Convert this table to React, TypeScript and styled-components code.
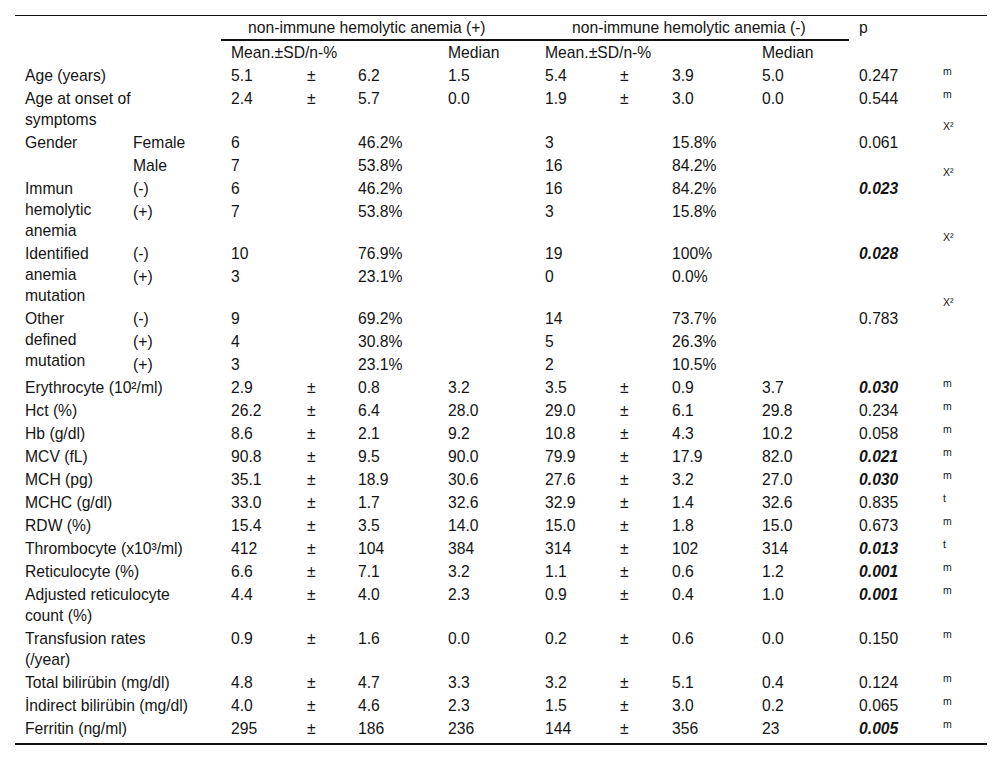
import React from 'react';
import styled, { createGlobalStyle } from 'styled-components';

const Global = createGlobalStyle`
  html, body { margin: 0; padding: 0; background: #fff; }
  body { font-family: "Liberation Sans", Arial, Helvetica, sans-serif; color: #141414; }
`;

const Page = styled.div`
  padding: 15px 13px 0 15px;
`;

const Table = styled.table`
  width: 972px;
  table-layout: fixed;
  border-collapse: separate;
  border-spacing: 0;
  border-top: 1px solid #111;
  border-bottom: 2px solid #111;
  font-size: 15.7px;
  line-height: 21px;
`;

const Body = styled.tbody`
  tr:last-child td { padding-bottom: 4px; }
`;

const Row = styled.tr<{ $h?: number }>`
  ${p => (p.$h ? `height: ${p.$h}px;` : '')}
`;

const Head = styled.th<{ $indent?: number; $rule?: boolean }>`
  padding: 1px 0 1px ${p => p.$indent ?? 10}px;
  vertical-align: top;
  text-align: left;
  font-weight: normal;
  white-space: nowrap;
  ${p => (p.$rule ? 'border-bottom: 2px solid #111;' : '')}
`;

const Cell = styled.td`
  padding: 1px 0 1px 10px;
  vertical-align: top;
  text-align: left;
  white-space: nowrap;
`;

const PVal = styled.span<{ $sig?: boolean }>`
  font-weight: ${p => (p.$sig ? 'bold' : 'normal')};
  font-style: ${p => (p.$sig ? 'italic' : 'normal')};
`;

const Mark = styled.span<{ $lift?: number }>`
  display: block;
  font-size: 10.5px;
  line-height: 10px;
  transform: translateY(${p => 1 - (p.$lift ?? 0)}px);
`;

const widths = [108, 98, 76, 51, 90, 97, 75, 52, 90, 97, 84, 54];

type Stat = {
  label: string[];
  v: [string, string, string, string, string, string];
  p: string;
  sig?: boolean;
  mark: string;
};

type Sub = { sub: string; n1: string; p1: string; n2: string; p2: string; p?: string; sig?: boolean };
type Group = { label: string[]; rows: Sub[]; h?: number };

const Lines = ({ lines }: { lines: string[] }) => (
  <>
    {lines.map((l, i) => (
      <React.Fragment key={i}>
        {i > 0 && <br />}
        {l}
      </React.Fragment>
    ))}
  </>
);

const StatRow = ({ s }: { s: Stat }) => (
  <Row>
    <Cell colSpan={2}>
      <Lines lines={s.label} />
    </Cell>
    <Cell>{s.v[0]}</Cell>
    <Cell>±</Cell>
    <Cell>{s.v[1]}</Cell>
    <Cell>{s.v[2]}</Cell>
    <Cell>{s.v[3]}</Cell>
    <Cell>±</Cell>
    <Cell>{s.v[4]}</Cell>
    <Cell>{s.v[5]}</Cell>
    <Cell>
      <PVal $sig={s.sig}>{s.p}</PVal>
    </Cell>
    <Cell>
      <Mark>{s.mark}</Mark>
    </Cell>
  </Row>
);

const GroupRows = ({ g }: { g: Group }) => (
  <>
    {g.rows.map((r, i) => (
      <Row key={i} $h={i === g.rows.length - 1 ? g.h : undefined}>
        {i === 0 && (
          <Cell rowSpan={g.rows.length}>
            <Lines lines={g.label} />
          </Cell>
        )}
        <Cell>{r.sub}</Cell>
        <Cell>{r.n1}</Cell>
        <Cell />
        <Cell>{r.p1}</Cell>
        <Cell />
        <Cell>{r.n2}</Cell>
        <Cell />
        <Cell>{r.p2}</Cell>
        <Cell />
        <Cell>{r.p && <PVal $sig={r.sig}>{r.p}</PVal>}</Cell>
        <Cell>{i === 0 && <Mark $lift={12}>X²</Mark>}</Cell>
      </Row>
    ))}
  </>
);

const top: Stat[] = [
  { label: ['Age (years)'], v: ['5.1', '6.2', '1.5', '5.4', '3.9', '5.0'], p: '0.247', mark: 'm' },
  { label: ['Age at onset of', 'symptoms'], v: ['2.4', '5.7', '0.0', '1.9', '3.0', '0.0'], p: '0.544', mark: 'm' },
];

const groups: Group[] = [
  {
    label: ['Gender'],
    rows: [
      { sub: 'Female', n1: '6', p1: '46.2%', n2: '3', p2: '15.8%', p: '0.061' },
      { sub: 'Male', n1: '7', p1: '53.8%', n2: '16', p2: '84.2%' },
    ],
  },
  {
    label: ['Immun', 'hemolytic', 'anemia'],
    h: 42,
    rows: [
      { sub: '(-)', n1: '6', p1: '46.2%', n2: '16', p2: '84.2%', p: '0.023', sig: true },
      { sub: '(+)', n1: '7', p1: '53.8%', n2: '3', p2: '15.8%' },
    ],
  },
  {
    label: ['Identified', 'anemia', 'mutation'],
    h: 42,
    rows: [
      { sub: '(-)', n1: '10', p1: '76.9%', n2: '19', p2: '100%', p: '0.028', sig: true },
      { sub: '(+)', n1: '3', p1: '23.1%', n2: '0', p2: '0.0%' },
    ],
  },
  {
    label: ['Other', 'defined', 'mutation'],
    rows: [
      { sub: '(-)', n1: '9', p1: '69.2%', n2: '14', p2: '73.7%', p: '0.783' },
      { sub: '(+)', n1: '4', p1: '30.8%', n2: '5', p2: '26.3%' },
      { sub: '(+)', n1: '3', p1: '23.1%', n2: '2', p2: '10.5%' },
    ],
  },
];

const labs: Stat[] = [
  { label: ['Erythrocyte (10²/ml)'], v: ['2.9', '0.8', '3.2', '3.5', '0.9', '3.7'], p: '0.030', sig: true, mark: 'm' },
  { label: ['Hct (%)'], v: ['26.2', '6.4', '28.0', '29.0', '6.1', '29.8'], p: '0.234', mark: 'm' },
  { label: ['Hb (g/dl)'], v: ['8.6', '2.1', '9.2', '10.8', '4.3', '10.2'], p: '0.058', mark: 'm' },
  { label: ['MCV (fL)'], v: ['90.8', '9.5', '90.0', '79.9', '17.9', '82.0'], p: '0.021', sig: true, mark: 'm' },
  { label: ['MCH (pg)'], v: ['35.1', '18.9', '30.6', '27.6', '3.2', '27.0'], p: '0.030', sig: true, mark: 'm' },
  { label: ['MCHC (g/dl)'], v: ['33.0', '1.7', '32.6', '32.9', '1.4', '32.6'], p: '0.835', mark: 't' },
  { label: ['RDW (%)'], v: ['15.4', '3.5', '14.0', '15.0', '1.8', '15.0'], p: '0.673', mark: 'm' },
  { label: ['Thrombocyte (x10³/ml)'], v: ['412', '104', '384', '314', '102', '314'], p: '0.013', sig: true, mark: 't' },
  { label: ['Reticulocyte (%)'], v: ['6.6', '7.1', '3.2', '1.1', '0.6', '1.2'], p: '0.001', sig: true, mark: 'm' },
  { label: ['Adjusted reticulocyte', 'count (%)'], v: ['4.4', '4.0', '2.3', '0.9', '0.4', '1.0'], p: '0.001', sig: true, mark: 'm' },
  { label: ['Transfusion rates', '(/year)'], v: ['0.9', '1.6', '0.0', '0.2', '0.6', '0.0'], p: '0.150', mark: 'm' },
  { label: ['Total bilirübin (mg/dl)'], v: ['4.8', '4.7', '3.3', '3.2', '5.1', '0.4'], p: '0.124', mark: 'm' },
  { label: ['İndirect bilirübin (mg/dl)'], v: ['4.0', '4.6', '2.3', '1.5', '3.0', '0.2'], p: '0.065', mark: 'm' },
  { label: ['Ferritin (ng/ml)'], v: ['295', '186', '236', '144', '356', '23'], p: '0.005', sig: true, mark: 'm' },
];

export default function App() {
  return (
    <Page>
      <Global />
      <Table>
        <colgroup>
          {widths.map((w, i) => (
            <col key={i} width={w} />
          ))}
        </colgroup>
        <thead>
          <Row>
            <Head colSpan={2} rowSpan={2} />
            <Head colSpan={4} $rule $indent={27}>
              non-immune hemolytic anemia (+)
            </Head>
            <Head colSpan={4} $rule $indent={37}>
              non-immune hemolytic anemia (-)
            </Head>
            <Head rowSpan={2}>p</Head>
            <Head rowSpan={2} />
          </Row>
          <Row>
            <Head colSpan={3}>Mean.±SD/n-%</Head>
            <Head>Median</Head>
            <Head colSpan={3}>Mean.±SD/n-%</Head>
            <Head>Median</Head>
          </Row>
        </thead>
        <Body>
          {top.map((s, i) => (
            <StatRow key={`t${i}`} s={s} />
          ))}
          {groups.map((g, i) => (
            <GroupRows key={`g${i}`} g={g} />
          ))}
          {labs.map((s, i) => (
            <StatRow key={`l${i}`} s={s} />
          ))}
        </Body>
      </Table>
    </Page>
  );
}
